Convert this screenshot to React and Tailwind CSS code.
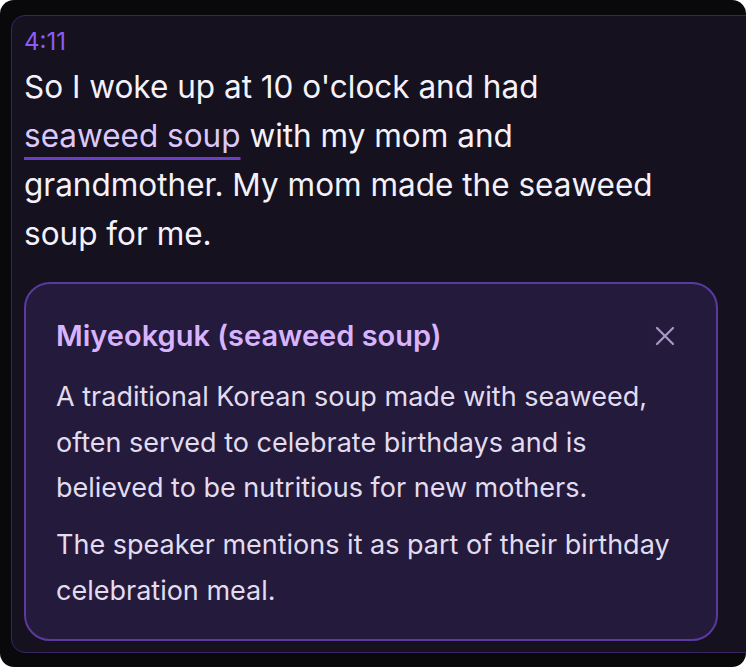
import { X } from 'lucide-react'

export default function App() {
  return (
    <div className="bg-white" style={{ fontFamily: 'Inter, "Noto Sans", sans-serif' }}>
      <div className="h-[667px] overflow-hidden rounded-[14px] bg-[#09090b] pl-[11px] pt-[15px]">
        <div className="-mr-8 h-[638px] rounded-l-[14px] border border-[#3b2463] bg-[#15111f] pl-[12px] pt-[10px]">
          <div className="mb-[4px] text-[24px] leading-[32px] text-[#8b5cf6]">4:11</div>
          <p className="w-[636px] text-[31.5px] leading-[49px] text-[#f4f1fa]">
            So I woke up at 10 o'clock and had{' '}
            <span className="text-[#dcc8fd] underline decoration-[#6d3fc9] decoration-[3px] underline-offset-[10px]">
              seaweed soup
            </span>{' '}
            with my mom and grandmother. My mom made the seaweed soup for me.
          </p>
          <div className="mt-[24px] w-[694px] rounded-[26px] border-2 border-[#5b3aa0] bg-[#241a3c] pb-[26px] pl-[30px] pr-[26px] pt-[30px]">
            <div className="flex items-center justify-between">
              <h3 className="text-[29px] font-semibold leading-[44px] text-[#d8b4fe]">Miyeokguk (seaweed soup)</h3>
              <X className="mr-[9px] h-[32px] w-[32px] text-[#a597c6]" strokeWidth={1.7} />
            </div>
            <p className="mt-[16px] text-[27px] leading-[45.5px] text-[#e2dcef]">
              A traditional Korean soup made with seaweed, often served to celebrate birthdays and is believed to be nutritious for new mothers.
            </p>
            <p className="mt-[11.5px] text-[27px] leading-[45.5px] text-[#e2dcef]">
              The speaker mentions it as part of their birthday celebration meal.
            </p>
          </div>
        </div>
      </div>
    </div>
  )
}
